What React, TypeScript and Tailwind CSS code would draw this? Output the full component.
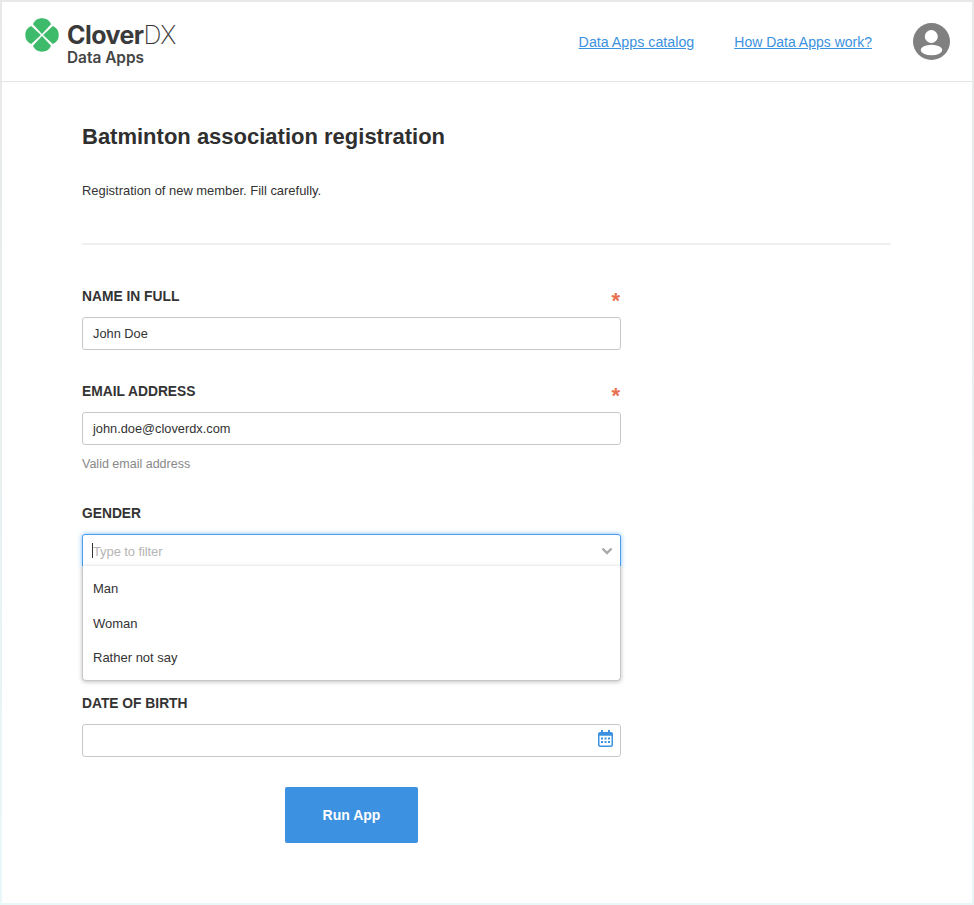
import React from "react";

function Clover() {
  const petal = "M17 15.9 L8 6.2 C9.5 2.4 12.8 0.3 17 0.3 C21.2 0.3 24.5 2.4 26 6.2 Z";
  return (
    <svg width="34" height="34" viewBox="0 0 34 34" className="shrink-0 mt-[-3px]">
      <g fill="#3dba6a">
        <path d={petal} />
        <path d={petal} transform="rotate(90 17 17)" />
        <path d={petal} transform="rotate(180 17 17)" />
        <path d={petal} transform="rotate(270 17 17)" />
      </g>
    </svg>
  );
}

function Avatar() {
  return (
    <svg width="37" height="37" viewBox="0 0 37 37">
      <circle cx="18.5" cy="18.5" r="18.5" fill="#808080" />
      <circle cx="18.3" cy="13.5" r="6.5" fill="#fff" />
      <ellipse cx="18.5" cy="27" rx="10.8" ry="5.2" fill="#fff" />
    </svg>
  );
}

function Field({ label, required, children }: { label: string; required?: boolean; children: React.ReactNode }) {
  return (
    <div>
      <div className="flex justify-between h-[16px] items-center mb-[12px]">
        <span className="text-[13.8px] font-bold text-[#333]">{label}</span>
        {required && <span className="text-[22px] leading-none font-bold text-[#e8704f] relative top-[4px] right-[1px]">*</span>}
      </div>
      {children}
    </div>
  );
}

function Box({ children }: { children?: React.ReactNode }) {
  return (
    <div className="h-[33px] w-full border border-[#c8c8c8] rounded-[3px] px-[10px] flex items-center text-[12.8px] text-[#333] bg-white">
      {children}
    </div>
  );
}

export default function App() {
  return (
    <div className="w-[974px] h-[905px] bg-linear-to-b from-[#e8e8e8] to-[#e8f8f8] p-[2px] font-['Liberation_Sans',Arial,sans-serif] text-[#333]">
      <div className="h-full bg-white flex flex-col">
        <header className="h-[80px] shrink-0 border-b border-[#e4e4e4] flex items-center pl-[23px] pr-[22px]">
          <div className="flex items-start gap-[9px] mt-[3px]">
            <Clover />
            <div className="flex flex-col font-['Inter',sans-serif] text-[#3a3a3a] mt-[2px] ml-[-1px]">
              <span className="text-[25px] leading-[24px] tracking-[-0.55px] font-bold">
                Clover<span className="font-extralight">DX</span>
              </span>
              <span className="text-[15.4px] leading-[16px] mt-[3px] font-semibold text-[#444]">Data Apps</span>
            </div>
          </div>
          <nav className="ml-auto flex items-center text-[14px] text-[#3c91e0] leading-[18px]">
            <a className="underline text-[14.25px]">Data Apps catalog</a>
            <a className="underline ml-[40px]">How Data Apps work?</a>
            <span className="ml-[41px] block h-[37px]">
              <Avatar />
            </span>
          </nav>
        </header>

        <main className="pl-[80px] pr-[81px] flex-1">
          <h1 className="text-[22px] leading-[26px] font-bold text-[#2f2f2f] mt-[42px]">Batminton association registration</h1>
          <p className="text-[12.95px] leading-[16px] mt-[33px] text-[#333]">Registration of new member. Fill carefully.</p>
          <div className="h-[2px] w-[809px] bg-[#f0f0f0] mt-[44px]" />

          <div className="w-[539px] mt-[44px] relative">
            <Field label="NAME IN FULL" required>
              <Box>John Doe</Box>
            </Field>

            <div className="mt-[34px]">
              <Field label="EMAIL ADDRESS" required>
                <Box>john.doe@cloverdx.com</Box>
              </Field>
              <p className="text-[12.5px] leading-[14px] mt-[12px] text-[#888]">Valid email address</p>
            </div>

            <div className="mt-[35px]">
              <Field label="GENDER">
                <div className="h-[33px] border border-[#4a9cec] rounded-t-[3px] shadow-[0_0_5px_#7fbdf5] flex items-center pl-[9px] pr-[7px] text-[13px] tracking-[-0.1px] relative z-10 bg-white">
                  <span className="w-px h-[15px] bg-[#333]" />
                  <span className="text-[#b5b5b5] mt-[2px]">Type to filter</span>
                  <svg width="12" height="8" viewBox="0 0 12 8" className="ml-auto">
                    <path d="M1.5 1.5 6 6 10.5 1.5" fill="none" stroke="#a8a8a8" strokeWidth="2.4" />
                  </svg>
                </div>
              </Field>
              <div className="relative z-20 -mt-px h-[115px] border border-t-0 border-[#c8c8c8] rounded-b-[4px] bg-white shadow-[0_1px_4px_rgba(0,0,0,0.25)] pt-[5.5px] flex flex-col text-[13px] text-[#333]">
                <div className="h-[34.5px] flex items-center px-[10px]">Man</div>
                <div className="h-[34.5px] flex items-center px-[10px]">Woman</div>
                <div className="h-[34.5px] flex items-center px-[10px]">Rather not say</div>
              </div>
            </div>

            <div className="mt-[15px]">
              <Field label="DATE OF BIRTH">
                <div className="h-[33px] border border-[#c8c8c8] rounded-[3px] flex items-center justify-end pr-[8px]">
                  <svg width="15" height="17" viewBox="0 0 15 17" className="mt-[-4px] mr-[-1px]">
                    <path d="M3 0h2v3H3zM10 0h2v3h-2z" fill="#3c91e0" />
                    <rect x="0.75" y="2.75" width="13.5" height="13.5" rx="1.5" fill="none" stroke="#3c91e0" strokeWidth="1.5" />
                    <rect x="0.75" y="2.75" width="13.5" height="3" fill="#3c91e0" />
                    <path d="M3 7.5h2v2H3zM6.5 7.5h2v2h-2zM10 7.5h2v2h-2zM3 11h2v2H3zM6.5 11h2v2h-2zM10 11h2v2h-2z" fill="#3c91e0" />
                  </svg>
                </div>
              </Field>
            </div>

            <div className="flex justify-center mt-[30px]">
              <button className="w-[133px] h-[56px] bg-[#3c91e0] rounded-[2px] text-white font-bold text-[14px]">Run App</button>
            </div>
          </div>
        </main>
      </div>
    </div>
  );
}
